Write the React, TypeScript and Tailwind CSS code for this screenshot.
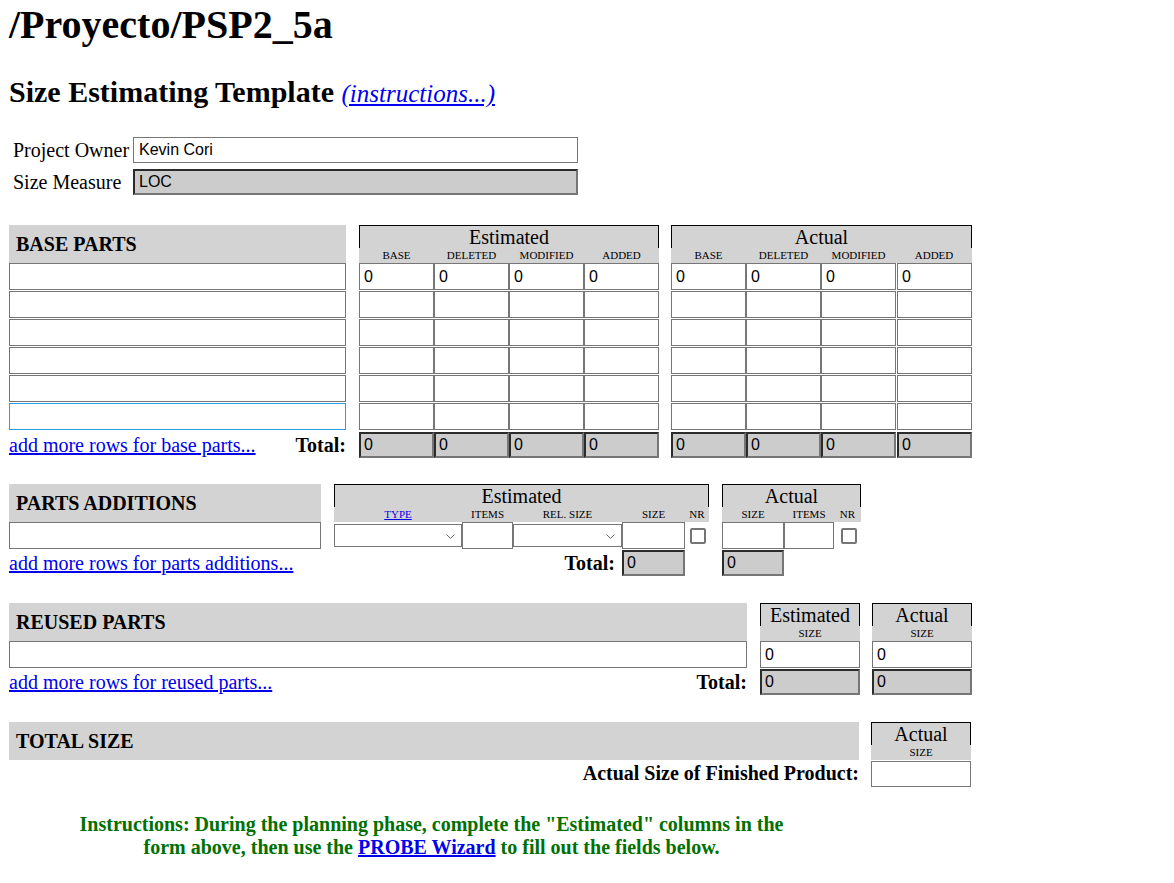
import React from 'react';

interface Sub {
  label: React.ReactNode;
  w: string;
}

const inputFont = "font-['Liberation_Sans',Arial,sans-serif] text-[16px] text-black";

function Field({ w, value = '', focus = false }: { w: string; value?: string; focus?: boolean }) {
  return (
    <input
      type="text"
      defaultValue={value}
      className={`${w} h-[27px] shrink-0 border bg-white pl-[4px] outline-none ${inputFont} ${
        focus ? 'border-[#2f9be0]' : 'border-[#767676]'
      }`}
    />
  );
}

function Total({ w, value = '0' }: { w: string; value?: string }) {
  return (
    <input
      type="text"
      readOnly
      defaultValue={value}
      className={`${w} h-[26px] shrink-0 border-2 border-t-[#2b2b2b] border-l-[#2b2b2b] border-r-[#767676] border-b-[#767676] bg-[#cccccc] pl-[3px] outline-none ${inputFont}`}
    />
  );
}

function Select({ w }: { w: string }) {
  return (
    <div className={`${w} relative h-[23px] shrink-0 border border-[#767676] bg-white`}>
      <svg className="absolute right-[6px] top-[9px]" width="9" height="5" viewBox="0 0 9 5">
        <path d="M0.5 0.5 L4.5 4.5 L8.5 0.5" stroke="#6b6b6b" strokeWidth="1" fill="none" />
      </svg>
    </div>
  );
}

function Check({ pad }: { pad: string }) {
  return (
    <div className={`flex h-[27px] items-center ${pad}`}>
      <div className="h-[16px] w-[16px] rounded-[2px] border-2 border-[#767676] bg-white" />
    </div>
  );
}

function SectionHead({ w, title }: { w: string; title: string }) {
  return (
    <div className={`${w} flex h-[38px] shrink-0 items-center bg-[#d3d3d3] pl-[7px] text-[20px] font-bold`}>
      {title}
    </div>
  );
}

function GroupHead({ w, title, subs }: { w: string; title: string; subs: Sub[] }) {
  return (
    <div className={`${w} flex shrink-0 flex-col`}>
      <div className="h-[23px] border-x border-t border-black bg-[#d3d3d3] text-center text-[20px] leading-[22px]">
        {title}
      </div>
      <div className="flex h-[15px] bg-[#d3d3d3] text-[11px] leading-[15px]">
        {subs.map((s, i) => (
          <div key={i} className={`${s.w} shrink-0 text-center`}>
            {s.label}
          </div>
        ))}
      </div>
    </div>
  );
}

const linkCls = 'text-[#0000ee] underline';

export default function App() {
  const baseSubs: Sub[] = [
    { label: 'BASE', w: 'w-[75px]' },
    { label: 'DELETED', w: 'w-[75px]' },
    { label: 'MODIFIED', w: 'w-[75px]' },
    { label: 'ADDED', w: 'w-[75px]' },
  ];
  const actualSubs: Sub[] = [
    { label: 'BASE', w: 'w-[75px]' },
    { label: 'DELETED', w: 'w-[75px]' },
    { label: 'MODIFIED', w: 'w-[75px]' },
    { label: 'ADDED', w: 'w-[76px]' },
  ];

  return (
    <div className="min-h-[883px] bg-white pl-[9px] pt-[2px] font-['Liberation_Serif','Times_New_Roman',serif] text-black">
      <h1 className="text-[40px] font-bold leading-[46px]">/Proyecto/PSP2_5a</h1>
      <h2 className="mt-[26px] text-[30px] font-bold leading-[35px]">
        Size Estimating Template{' '}
        <a href="#" className={`text-[25px] font-normal italic ${linkCls}`}>
          (instructions...)
        </a>
      </h2>

      {/* owner / measure */}
      <div className="mt-[23px] flex flex-col">
        <div className="flex h-[32px] items-center pl-[4px]">
          <span className="w-[120px] text-[20px]">Project Owner</span>
          <input
            type="text"
            defaultValue="Kevin Cori"
            className={`h-[26px] w-[445px] border border-[#767676] bg-white pl-[5px] outline-none ${inputFont}`}
          />
        </div>
        <div className="flex h-[32px] items-center pl-[4px]">
          <span className="w-[120px] text-[20px]">Size Measure</span>
          <input
            type="text"
            readOnly
            defaultValue="LOC"
            className={`h-[26px] w-[445px] border-2 border-t-[#2b2b2b] border-l-[#2b2b2b] border-r-[#767676] border-b-[#767676] bg-[#cccccc] pl-[4px] outline-none ${inputFont}`}
          />
        </div>
      </div>

      {/* BASE PARTS */}
      <div className="mt-[27px]">
        <div className="flex">
          <SectionHead w="w-[337px]" title="BASE PARTS" />
          <div className="ml-[13px]">
            <GroupHead w="w-[300px]" title="Estimated" subs={baseSubs} />
          </div>
          <div className="ml-[12px]">
            <GroupHead w="w-[301px]" title="Actual" subs={actualSubs} />
          </div>
        </div>
        {[0, 1, 2, 3, 4, 5].map((i) => (
          <div key={i} className="flex h-[28px]">
            <Field w="w-[337px]" focus={i === 5} />
            <div className="ml-[13px] flex">
              {[0, 1, 2, 3].map((c) => (
                <Field key={c} w="w-[75px]" value={i === 0 ? '0' : ''} />
              ))}
            </div>
            <div className="ml-[12px] flex">
              {[0, 1, 2].map((c) => (
                <Field key={c} w="w-[75px]" value={i === 0 ? '0' : ''} />
              ))}
              <div className="ml-[1px] flex">
                <Field w="w-[75px]" value={i === 0 ? '0' : ''} />
              </div>
            </div>
          </div>
        ))}
        <div className="flex h-[28px] items-start">
          <div className="flex h-[28px] w-[337px] items-center justify-between text-[20px] leading-[23px]">
            <a href="#" className={linkCls}>
              add more rows for base parts...
            </a>
            <span className="font-bold">Total:</span>
          </div>
          <div className="ml-[13px] mt-[1px] flex">
            {[0, 1, 2, 3].map((c) => (
              <Total key={c} w="w-[75px]" />
            ))}
          </div>
          <div className="ml-[12px] mt-[1px] flex">
            {[0, 1, 2].map((c) => (
              <Total key={c} w="w-[75px]" />
            ))}
            <div className="ml-[1px] flex">
              <Total w="w-[75px]" />
            </div>
          </div>
        </div>
      </div>

      {/* PARTS ADDITIONS */}
      <div className="mt-[25px]">
        <div className="flex">
          <SectionHead w="w-[312px]" title="PARTS ADDITIONS" />
          <div className="ml-[13px]">
            <GroupHead
              w="w-[375px]"
              title="Estimated"
              subs={[
                {
                  label: (
                    <a href="#" className={linkCls}>
                      TYPE
                    </a>
                  ),
                  w: 'w-[128px]',
                },
                { label: 'ITEMS', w: 'w-[51px]' },
                { label: 'REL. SIZE', w: 'w-[109px]' },
                { label: 'SIZE', w: 'w-[63px]' },
                { label: 'NR', w: 'w-[24px]' },
              ]}
            />
          </div>
          <div className="ml-[13px]">
            <GroupHead
              w="w-[139px]"
              title="Actual"
              subs={[
                { label: 'SIZE', w: 'w-[62px]' },
                { label: 'ITEMS', w: 'w-[50px]' },
                { label: 'NR', w: 'w-[27px]' },
              ]}
            />
          </div>
        </div>
        <div className="flex h-[27px] items-center">
          <Field w="w-[312px]" />
          <div className="ml-[13px] flex items-center">
            <Select w="w-[128px]" />
            <Field w="w-[51px]" />
            <Select w="w-[109px]" />
            <Field w="w-[63px]" />
            <Check pad="w-[24px] pl-[5px]" />
          </div>
          <div className="ml-[13px] flex items-center">
            <Field w="w-[62px]" />
            <Field w="w-[50px]" />
            <Check pad="w-[27px] pl-[7px]" />
          </div>
        </div>
        <div className="flex h-[28px] items-start">
          <div className="flex h-[28px] w-[312px] items-center text-[20px] leading-[23px]">
            <a href="#" className={linkCls}>
              add more rows for parts additions...
            </a>
          </div>
          <div className="ml-[13px] mt-[1px] flex w-[375px] items-center">
            <span className="flex-1 pr-[7px] text-right text-[20px] font-bold leading-[23px]">Total:</span>
            <Total w="w-[63px]" />
            <div className="w-[24px]" />
          </div>
          <div className="ml-[13px] mt-[1px] flex">
            <Total w="w-[62px]" />
          </div>
        </div>
      </div>

      {/* REUSED PARTS */}
      <div className="mt-[26px]">
        <div className="flex">
          <SectionHead w="w-[738px]" title="REUSED PARTS" />
          <div className="ml-[13px]">
            <GroupHead w="w-[100px]" title="Estimated" subs={[{ label: 'SIZE', w: 'w-[100px]' }]} />
          </div>
          <div className="ml-[12px]">
            <GroupHead w="w-[100px]" title="Actual" subs={[{ label: 'SIZE', w: 'w-[100px]' }]} />
          </div>
        </div>
        <div className="flex h-[28px]">
          <Field w="w-[738px]" />
          <div className="ml-[13px]">
            <Field w="w-[100px]" value="0" />
          </div>
          <div className="ml-[12px]">
            <Field w="w-[100px]" value="0" />
          </div>
        </div>
        <div className="flex h-[27px] items-start">
          <div className="flex h-[26px] w-[738px] items-center justify-between text-[20px] leading-[23px]">
            <a href="#" className={linkCls}>
              add more rows for reused parts...
            </a>
            <span className="font-bold">Total:</span>
          </div>
          <div className="ml-[13px]">
            <Total w="w-[100px]" />
          </div>
          <div className="ml-[12px]">
            <Total w="w-[100px]" />
          </div>
        </div>
      </div>

      {/* TOTAL SIZE */}
      <div className="mt-[26px]">
        <div className="flex">
          <SectionHead w="w-[850px]" title="TOTAL SIZE" />
          <div className="ml-[12px]">
            <GroupHead w="w-[100px]" title="Actual" subs={[{ label: 'SIZE', w: 'w-[100px]' }]} />
          </div>
        </div>
        <div className="flex h-[27px] items-start">
          <div className="flex h-[27px] w-[850px] items-center justify-end text-[20px] font-bold leading-[23px]">
            Actual Size of Finished Product:
          </div>
          <div className="ml-[12px] mt-[1px]">
            <input
              type="text"
              className={`h-[26px] w-[100px] border border-[#767676] bg-white pl-[4px] outline-none ${inputFont}`}
            />
          </div>
        </div>
      </div>

      <div className="mt-[26px] w-[845px] text-center text-[20px] font-bold leading-[23px] text-[#007000]">
        Instructions: During the planning phase, complete the "Estimated" columns in the
        <br />
        form above, then use the{' '}
        <a href="#" className={linkCls}>
          PROBE Wizard
        </a>{' '}
        to fill out the fields below.
      </div>
    </div>
  );
}
